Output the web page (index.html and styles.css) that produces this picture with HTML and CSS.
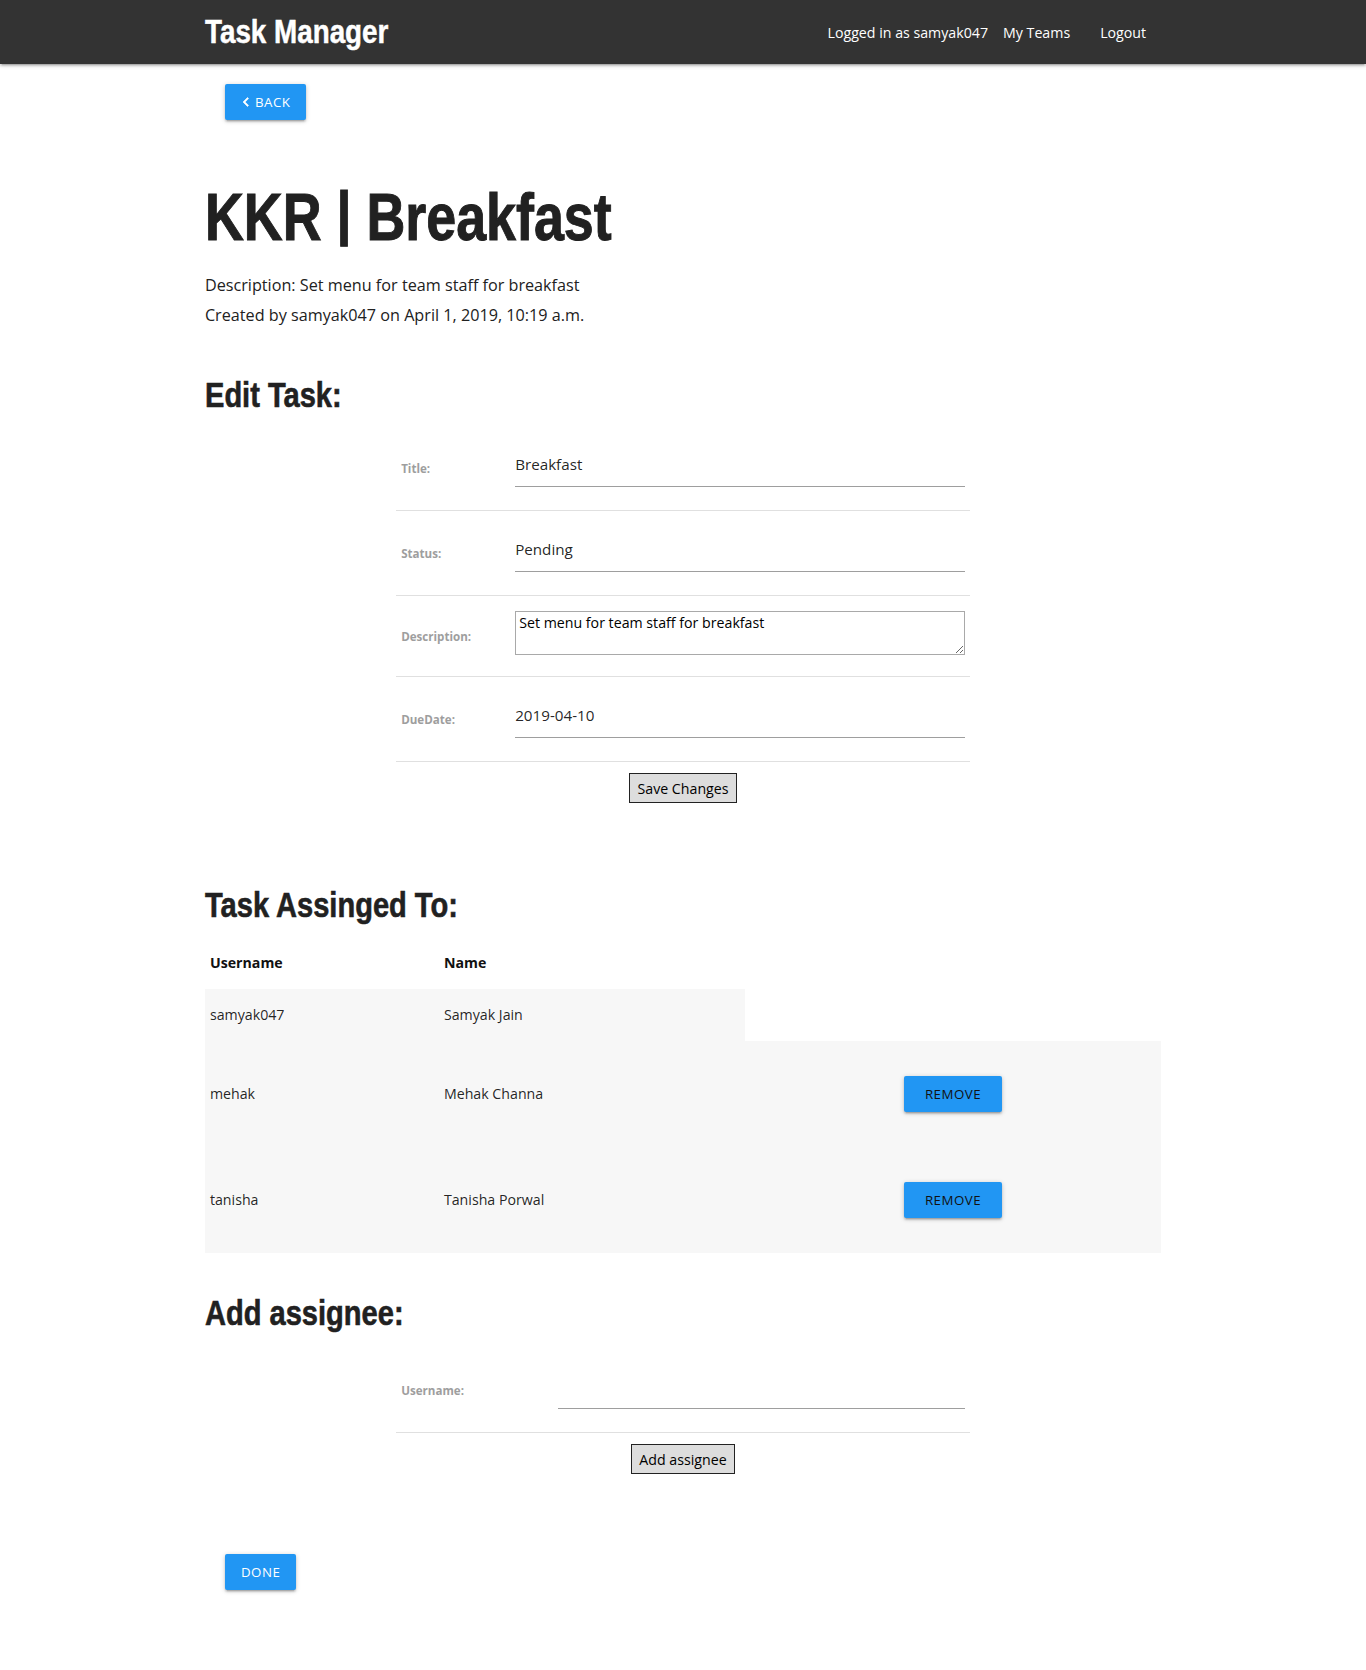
FILE: index.html
```html
<!DOCTYPE html>
<html lang="en">
<head>
<meta charset="utf-8">
<title>Task Manager</title>
<link rel="stylesheet" href="styles.css">
</head>
<body>
<nav class="navbar">
  <div class="container nav-inner">
    <a class="brand" href="#">Task Manager</a>
    <ul class="nav-links">
      <li class="nav-text">Logged in as samyak047</li>
      <li><a href="#">My Teams</a></li>
      <li><a href="#">Logout</a></li>
    </ul>
  </div>
</nav>

<main class="container">
  <div class="back-row">
    <a class="btn btn-light-text" href="#">
      <svg class="chev" viewBox="0 0 24 24" width="18" height="18"><path d="M15.41 7.41L14 6l-6 6 6 6 1.41-1.41L10.83 12z" fill="currentColor" stroke="currentColor" stroke-width="0.8"/></svg>
      Back
    </a>
  </div>

  <h1 class="page-title">KKR <span class="sep">|</span> Breakfast</h1>
  <p class="meta">Description: Set menu for team staff for breakfast</p>
  <p class="meta">Created by samyak047 on April 1, 2019, 10:19 a.m.</p>

  <h4 class="section-title edit-title">Edit Task:</h4>
  <form class="task-form">
    <table class="form-table">
      <colgroup><col class="label-col"><col></colgroup>
      <tbody>
        <tr>
          <th>Title:</th>
          <td><input type="text" value="Breakfast"></td>
        </tr>
        <tr>
          <th>Status:</th>
          <td><input type="text" value="Pending"></td>
        </tr>
        <tr>
          <th>Description:</th>
          <td><textarea>Set menu for team staff for breakfast</textarea></td>
        </tr>
        <tr>
          <th>DueDate:</th>
          <td><input type="text" value="2019-04-10"></td>
        </tr>
      </tbody>
    </table>
    <div class="form-actions"><button type="button" class="plain-btn">Save Changes</button></div>
  </form>

  <h4 class="section-title assigned-title">Task Assinged To:</h4>
  <table class="assign-table">
    <colgroup><col class="user-col"><col class="name-col"><col></colgroup>
    <thead>
      <tr><th>Username</th><th>Name</th></tr>
    </thead>
    <tbody>
      <tr><td>samyak047</td><td>Samyak Jain</td></tr>
    </tbody>
    <tbody>
      <tr>
        <td>mehak</td><td>Mehak Channa</td>
        <td><div class="action-wrap"><button type="button" class="btn btn-dark-text btn-wide">Remove</button></div></td>
      </tr>
    </tbody>
    <tbody>
      <tr>
        <td>tanisha</td><td>Tanisha Porwal</td>
        <td><div class="action-wrap"><button type="button" class="btn btn-dark-text btn-wide">Remove</button></div></td>
      </tr>
    </tbody>
  </table>

  <h4 class="section-title add-title">Add assignee:</h4>
  <form class="task-form">
    <table class="form-table form-table-wide">
      <colgroup><col class="label-col"><col></colgroup>
      <tbody>
        <tr>
          <th>Username:</th>
          <td><input type="text" value=""></td>
        </tr>
      </tbody>
    </table>
    <div class="form-actions"><button type="button" class="plain-btn">Add assignee</button></div>
  </form>

  <div class="done-row">
    <a class="btn btn-light-text" href="#">Done</a>
  </div>
</main>
</body>
</html>
```

FILE: styles.css
```css
html, body {
  margin: 0;
  padding: 0;
}

body {
  font-family: "Open Sans", "Noto Sans", sans-serif;
  color: rgba(0, 0, 0, 0.87);
  background: #fff;
}

.container {
  width: 70%;
  margin: 0 auto;
}

/* ---------- navbar ---------- */
.navbar {
  height: 64px;
  background: #333333;
  box-shadow: 0 2px 2px 0 rgba(0, 0, 0, 0.14), 0 3px 1px -2px rgba(0, 0, 0, 0.12), 0 1px 5px 0 rgba(0, 0, 0, 0.2);
}

.nav-inner {
  display: flex;
  justify-content: space-between;
  align-items: center;
  height: 64px;
}

.brand {
  display: inline-block;
  font-family: "Liberation Sans", Arial, sans-serif;
  font-weight: 700;
  font-size: 33.5px;
  line-height: 64px;
  color: #fff;
  text-decoration: none;
  -webkit-text-stroke: 0.5px #fff;
  transform: scaleX(0.83);
  transform-origin: 0 50%;
}

.nav-links {
  list-style: none;
  margin: 2px 0 0;
  padding: 0;
  display: flex;
  align-items: center;
  font-size: 14.2px;
  line-height: 62px;
  color: #fff;
}

.nav-links a {
  display: block;
  padding: 0 15px;
  color: #fff;
  text-decoration: none;
}

/* ---------- buttons ---------- */
.btn {
  display: inline-flex;
  align-items: center;
  height: 36px;
  padding: 0 16px;
  border: none;
  border-radius: 2px;
  background: #2196F3;
  font-family: "Open Sans", "Noto Sans", sans-serif;
  font-size: 13.3px;
  letter-spacing: 0.5px;
  text-transform: uppercase;
  text-decoration: none;
  box-shadow: 0 2px 2px 0 rgba(0, 0, 0, 0.14), 0 3px 1px -2px rgba(0, 0, 0, 0.12), 0 1px 5px 0 rgba(0, 0, 0, 0.2);
  cursor: pointer;
}

.btn-wide {
  padding: 0 21px;
}

.btn-light-text {
  color: #fff;
}

.btn-dark-text {
  color: #111;
}

.chev {
  margin-left: -4px;
  margin-right: 0;
}

.back-row {
  display: flex;
  padding: 20px 0 0 20px;
}

.done-row {
  display: flex;
  padding-left: 20px;
  margin-top: 80px;
  padding-bottom: 40px;
}

/* ---------- headings ---------- */
.page-title {
  font-family: "Liberation Sans", Arial, sans-serif;
  font-weight: 700;
  font-size: 66px;
  line-height: 72px;
  margin: 61px 0 17px;
  color: #212121;
  -webkit-text-stroke: 1px #212121;
  transform: scaleX(0.815);
  transform-origin: 0 50%;
}

.sep {
  display: inline-block;
  transform: translateY(-5px) scaleY(0.9);
}

.meta {
  margin: 0;
  font-size: 16.2px;
  line-height: 30px;
  color: #212121;
}

.section-title {
  font-family: "Liberation Sans", Arial, sans-serif;
  font-weight: 700;
  font-size: 35px;
  line-height: 40px;
  color: #212121;
  margin: 0;
  -webkit-text-stroke: 0.6px #212121;
  transform: scaleX(0.83);
  transform-origin: 0 50%;
}

.edit-title {
  margin: 45px 0 11px;
}

.assigned-title {
  margin: 82px 0 12px;
}

.add-title {
  margin: 40px 0 15px;
}

/* ---------- form tables ---------- */
.form-table {
  width: 60%;
  margin: 0 auto;
  border-collapse: separate;
  border-spacing: 0;
  table-layout: fixed;
}

.form-table .label-col {
  width: 114px;
}

.form-table-wide .label-col {
  width: 157px;
}

.form-table th,
.form-table td {
  padding: 15px 5px;
  border-bottom: 1px solid rgba(0, 0, 0, 0.12);
  vertical-align: middle;
}

.form-table th {
  text-align: left;
  font-size: 11.6px;
  font-weight: 700;
  color: #9e9e9e;
}

.form-table input {
  display: block;
  width: 100%;
  height: 45px;
  margin: 0 0 8px;
  padding: 0;
  border: none;
  border-bottom: 1px solid #9e9e9e;
  background: transparent;
  font-family: "Open Sans", "Noto Sans", sans-serif;
  font-size: 15.2px;
  color: rgba(0, 0, 0, 0.87);
  outline: none;
  box-sizing: content-box;
}

.form-table textarea {
  display: block;
  width: 100%;
  height: 44px;
  margin: 0 0 6px;
  padding: 2px 3px;
  box-sizing: border-box;
  border: 1px solid #a9a9a9;
  font-family: "Open Sans", "Noto Sans", sans-serif;
  font-size: 14.2px;
  line-height: 18px;
  color: #000;
  resize: vertical;
}

.form-actions {
  display: flex;
  justify-content: center;
  padding-top: 11px;
}

.plain-btn {
  height: 30px;
  padding: 0 7px;
  border: 1px solid #222;
  border-radius: 0;
  background: #dddddd;
  color: #000;
  font-family: "Open Sans", "Noto Sans", sans-serif;
  font-size: 14.2px;
}

/* ---------- assigned table ---------- */
.assign-table {
  width: 100%;
  border-collapse: separate;
  border-spacing: 0;
  table-layout: fixed;
}

.assign-table .user-col {
  width: 234px;
}

.assign-table .name-col {
  width: 306px;
}

.assign-table th,
.assign-table td {
  padding: 15px 5px;
  text-align: left;
  vertical-align: middle;
  font-size: 14.2px;
  line-height: 22px;
}

.assign-table th {
  font-weight: 700;
  color: #111;
}

.assign-table tbody td {
  background: #f7f7f7;
}

.action-wrap {
  display: flex;
  justify-content: center;
  padding: 20px 0;
}
```
